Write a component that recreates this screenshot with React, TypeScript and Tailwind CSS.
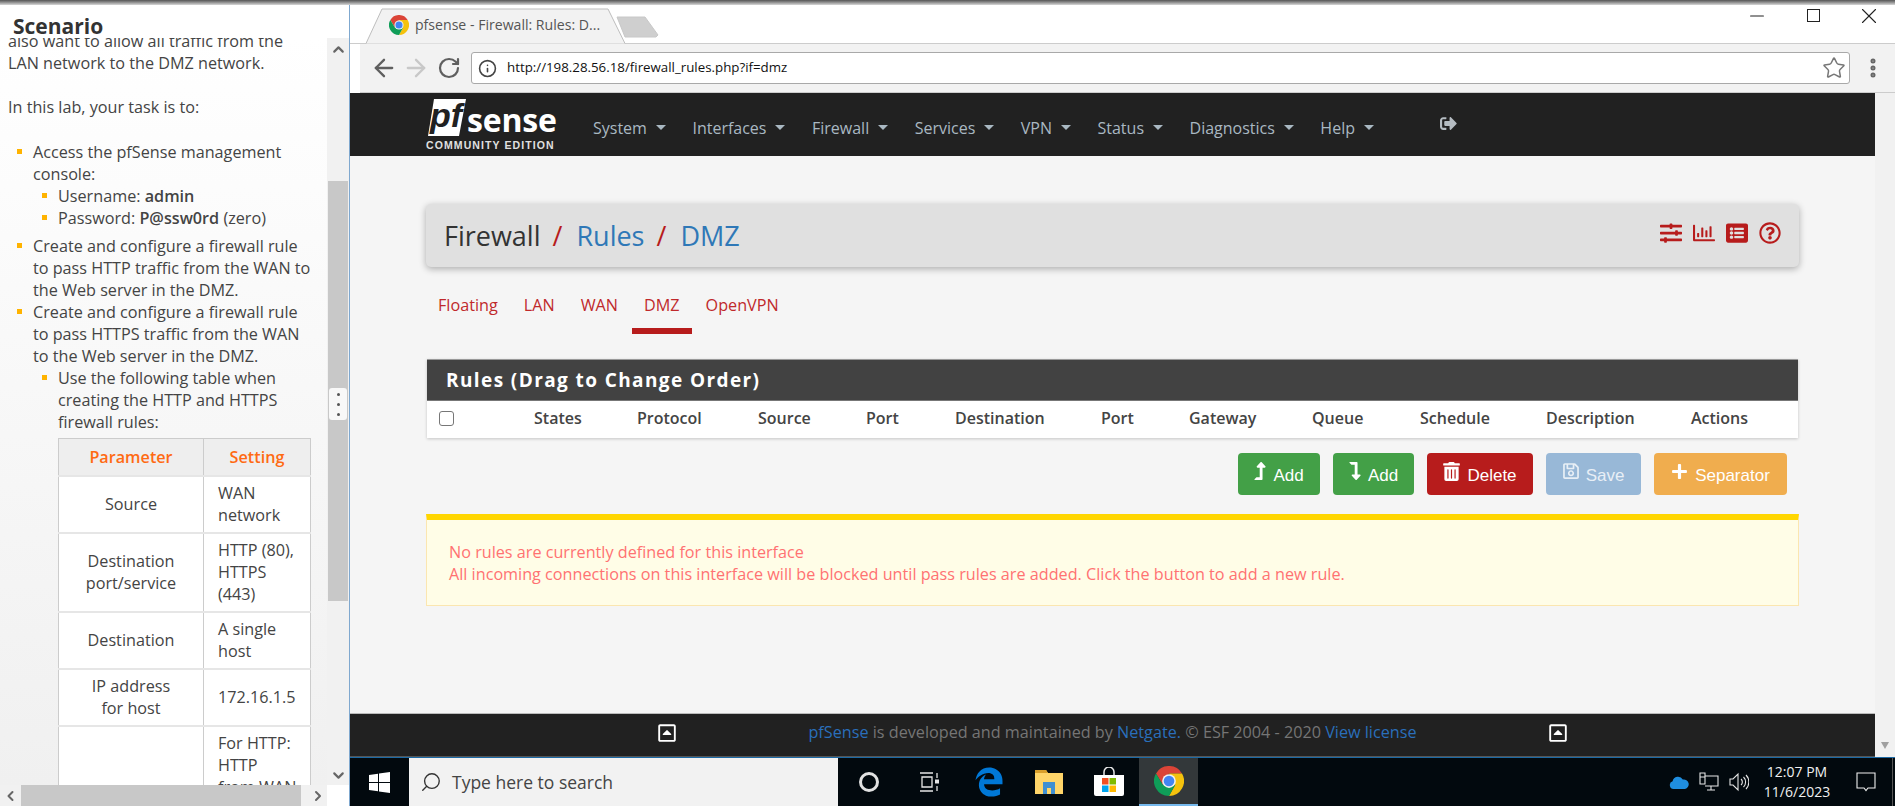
import { ArrowLeft, ArrowRight, ChevronDown, ChevronLeft, ChevronRight, ChevronUp, EllipsisVertical, Info, Minus, RotateCw, Search, Star, X } from "lucide-react";
import {
  FaEdgeLegacy, FaListAlt, FaLevelDownAlt, FaLevelUpAlt, FaPlus, FaRegCaretSquareUp, FaRegChartBar,
  FaRegQuestionCircle, FaRegSave, FaSignOutAlt, FaSlidersH, FaTrashAlt,
} from "react-icons/fa";

const NAV_ITEMS = ["System", "Interfaces", "Firewall", "Services", "VPN", "Status", "Diagnostics", "Help"];
const TABS = ["Floating", "LAN", "WAN", "DMZ", "OpenVPN"];

const COLUMNS = [
  { label: "States", width: 103 },
  { label: "Protocol", width: 121 },
  { label: "Source", width: 108 },
  { label: "Port", width: 89 },
  { label: "Destination", width: 146 },
  { label: "Port", width: 88 },
  { label: "Gateway", width: 123 },
  { label: "Queue", width: 108 },
  { label: "Schedule", width: 126 },
  { label: "Description", width: 145 },
  { label: "Actions", width: 107 },
];

function ChromeLogo({ size }: { size: number }) {
  return (
    <svg width={size} height={size} viewBox="0 0 48 48">
      <path d="M3.2 12A24 24 0 0 1 44.8 12H24L14 30Z" fill="#db4437" />
      <path d="M44.8 12A24 24 0 0 1 24 48L34 30L24 12Z" fill="#f4c20d" />
      <path d="M24 48A24 24 0 0 1 3.2 12L14 30L34 30Z" fill="#0f9d58" />
      <circle cx="24" cy="24" r="11" fill="#f1f1f1" />
      <circle cx="24" cy="24" r="8.5" fill="#4285f4" />
    </svg>
  );
}

function Bullet({ nested, children }: { nested?: boolean; children: React.ReactNode }) {
  return (
    <li className={`relative ${nested ? "pl-[50px]" : "pl-[25px]"}`}>
      <span className={`absolute top-[8px] h-[5px] w-[5px] bg-[#ffb300] ${nested ? "left-[34px]" : "left-[9px]"}`} />
      {children}
    </li>
  );
}

function ParamRow({ name, value }: { name: string; value: string }) {
  return (
    <tr className="border-b-2 border-[#e6e6e6] bg-white">
      <td className="border-x border-[#ccc] px-[24px] py-[5.5px] text-center">{name}</td>
      <td className="border-x border-[#ccc] py-[5.5px] pl-[14px] pr-[13px]">{value}</td>
    </tr>
  );
}

function ScenarioPanel() {
  return (
    <aside className="flex w-[350px] shrink-0 flex-col border-r border-[#7fa8cf] bg-white text-[16.2px] leading-[22px] text-[#444]">
      <div className="relative z-10 flex h-[33px] items-center bg-white pl-[13px] pt-[8px] text-[21px] font-bold text-[#333]">Scenario</div>
      <div className="flex min-h-0 flex-1">
        <div className="min-w-0 flex-1 overflow-hidden bg-gradient-to-b from-white to-[#f0f0f0]">
          <div className="-mt-[8px] pl-[8px] pr-[14px]">
            <p>also want to allow all traffic from the LAN network to the DMZ network.</p>
            <p className="mt-[22px]">In this lab, your task is to:</p>
            <ul className="mt-[23px]">
              <Bullet>Access the pfSense management console:</Bullet>
              <Bullet nested>Username: <b className="font-semibold">admin</b></Bullet>
              <Bullet nested>Password: <b className="font-semibold">P@ssw0rd</b> (zero)</Bullet>
              <li className="h-[6px]" />
              <Bullet>Create and configure a firewall rule to pass HTTP traffic from the WAN to the Web server in the DMZ.</Bullet>
              <Bullet>Create and configure a firewall rule to pass HTTPS traffic from the WAN to the Web server in the DMZ.</Bullet>
              <Bullet nested>Use the following table when creating the HTTP and HTTPS firewall rules:</Bullet>
            </ul>
            <table className="ml-[50px] mt-[5px] w-[252px] table-fixed border-t border-[#ccc]">
              <colgroup>
                <col className="w-[145px]" />
                <col className="w-[107px]" />
              </colgroup>
              <thead>
                <tr className="h-[37px] border-b-2 border-[#e6e6e6] bg-[#eeeeee] font-semibold text-[#ff6a13]">
                  <th className="border-x border-[#ccc] font-semibold">Parameter</th>
                  <th className="border-x border-[#ccc] font-semibold">Setting</th>
                </tr>
              </thead>
              <tbody>
                <ParamRow name="Source" value="WAN network" />
                <ParamRow name="Destination port/service" value="HTTP (80), HTTPS (443)" />
                <ParamRow name="Destination" value="A single host" />
                <ParamRow name="IP address for host" value="172.16.1.5" />
                <ParamRow name="" value="For HTTP: HTTP from WAN" />
              </tbody>
            </table>
          </div>
        </div>
        {/* vertical scrollbar */}
        <div className="flex w-[22px] shrink-0 flex-col items-center bg-[#f1f1f1]">
          <ChevronUp size={17} strokeWidth={3} className="mt-[3px] text-[#666]" />
          <div className="relative mt-[123px] h-[420px] w-[20px] bg-[#c8c8c8]">
            <div className="absolute left-[1px] top-[207px] flex h-[32px] w-[18px] flex-col items-center justify-center gap-[7px] rounded-[3px] bg-[#f8f8f8]">
              <span className="h-[3px] w-[3px] rounded-full bg-[#555]" />
              <span className="h-[3px] w-[3px] rounded-full bg-[#555]" />
              <span className="h-[3px] w-[3px] rounded-full bg-[#555]" />
            </div>
          </div>
          <ChevronDown size={17} strokeWidth={3} className="mt-auto mb-[1px] text-[#666]" />
        </div>
      </div>
      {/* horizontal scrollbar */}
      <div className="flex h-[21px] shrink-0 items-center">
        <div className="flex h-full w-[327px] items-center bg-[#f1f1f1]">
          <ChevronLeft size={16} strokeWidth={3} className="ml-[2px] w-[17px] text-[#666]" />
          <div className="ml-[2px] h-full w-[280px] bg-[#c8c8c8]" />
          <ChevronRight size={16} strokeWidth={3} className="ml-[9px] text-[#666]" />
        </div>
      </div>
    </aside>
  );
}

function BrowserChrome() {
  return (
    <>
      <div className="flex h-[39px] shrink-0 items-start border-b border-[#ccc] bg-white">
        <div className="relative z-10 ml-[15px] mt-[3px] flex h-[36px] w-[261px] items-center pb-[2px] pl-[24px] text-[14.1px] text-[#555]">
          <svg className="absolute inset-0" width="261" height="36" viewBox="0 0 261 36">
            <path d="M1 35.5L17 1H243L260 35.5" fill="#f2f2f2" stroke="#bdbdbd" />
          </svg>
          <span className="relative flex items-center gap-[6px]">
            <ChromeLogo size={20} />
            pfsense - Firewall: Rules: D...
          </span>
        </div>
        <svg className="ml-[-11px] mt-[11px]" width="44" height="22" viewBox="0 0 44 22">
          <path d="M2 1H30L43 19L41 21H10Z" fill="#cfcfcf" stroke="#c8c8c8" strokeLinejoin="round" />
        </svg>
        <div className="ml-auto flex h-[20px] text-[#222]">
          <div className="flex w-[57px] items-center justify-center pt-[1px]"><Minus size={22} strokeWidth={1.2} /></div>
          <div className="flex w-[57px] items-center justify-center pt-[1px]"><span className="h-[13px] w-[13px] border-[1.5px] border-[#222]" /></div>
          <div className="flex w-[53px] items-center justify-center pt-[1px]"><X size={26} strokeWidth={1} /></div>
        </div>
      </div>
      <div className="ml-[10px] flex h-[49px] shrink-0 items-center border-b border-[#ccc] bg-[#f2f2f2]">
        <div className="ml-[8px] flex w-[32px] justify-center"><ArrowLeft size={28} strokeWidth={2} className="text-[#5f5f5f]" /></div>
        <div className="flex w-[32px] justify-center"><ArrowRight size={28} strokeWidth={2} className="text-[#c8c8c8]" /></div>
        <div className="flex w-[33px] justify-center"><RotateCw size={24} strokeWidth={2.2} className="text-[#5f5f5f]" /></div>
        <div className="ml-[6px] flex h-[32px] flex-1 items-center rounded-[3px] border border-[#a9a9a9] bg-white pl-[6px] pr-[3px]">
          <Info size={19} strokeWidth={2} className="text-[#444]" />
          <span className="ml-[10px] text-[13.3px] text-[#111]">http://198.28.56.18/firewall_rules.php?if=dmz</span>
          <Star size={24} strokeWidth={1.5} className="ml-auto text-[#777]" />
        </div>
        <div className="flex w-[45px] justify-center"><EllipsisVertical size={24} strokeWidth={3} className="text-[#666]" /></div>
      </div>
    </>
  );
}

function PfLogo() {
  return (
    <div className="w-[132px] select-none text-white">
      <div className="flex h-[38px] items-end">
        <svg className="ml-[2px]" width="38" height="37" viewBox="0 0 38 37">
          <path d="M6 0H38L31 37H0Z" fill="#ffffff" />
          <text x="2" y="28" fontSize="34" fontWeight="700" fontStyle="italic" fill="#212121" fontFamily="Liberation Sans, sans-serif">pf</text>
        </svg>
        <span className="ml-[1px] text-[32px] font-bold leading-[32px] tracking-[-0.2px]">sense</span>
      </div>
      <div className="mt-[3px] whitespace-nowrap font-['Liberation_Sans',sans-serif] text-[10.5px] font-bold leading-[12px] tracking-[1.1px] text-[#e0e0e0]">COMMUNITY EDITION</div>
    </div>
  );
}

function NavBar() {
  return (
    <nav className="flex h-[63px] shrink-0 items-center bg-[#212121] pl-[76px] text-[16px] text-[#a9b8c2]">
      <PfLogo />
      <div className="ml-[35px] flex items-center pt-[6px]">
        {NAV_ITEMS.map((item) => (
          <a key={item} className="mr-[26.5px] flex items-center gap-[9px]">
            {item}
            <span className="h-0 w-0 border-x-[5px] border-t-[5px] border-x-transparent border-t-[#a9b8c2]" />
          </a>
        ))}
      </div>
      <FaSignOutAlt size={17} className="ml-[40px] mb-[2px] text-[#b5bcc2]" />
    </nav>
  );
}

function ActionButton({ color, icon, label, width, text = "text-white" }: { color: string; icon: React.ReactNode; label: string; width: string; text?: string }) {
  return (
    <button className={`flex h-[42px] items-center justify-center gap-[7px] rounded-[4px] font-['Liberation_Sans',sans-serif] text-[17px] ${width} ${color} ${text}`}>
      <span className="mb-[6px] flex">{icon}</span>
      <span className="mt-[4px]">{label}</span>
    </button>
  );
}

function FirewallMain() {
  return (
    <main className="min-h-0 flex-1 bg-[#f5f5f5] px-[76px] pt-[48px]">
      <div className="flex h-[63px] items-center justify-between rounded-[5px] bg-[#e0e0e0] pl-[18px] pr-[18px] shadow-[0_2px_7px_rgba(0,0,0,0.3)]">
        <h1 className="pt-[1px] text-[27px] text-[#333]">
          Firewall
          <span className="ml-[12px] mr-[14px] text-[#b71c1c]">/</span>
          <a className="text-[#2f78b7]">Rules</a>
          <span className="ml-[12px] mr-[14px] text-[#b71c1c]">/</span>
          <a className="text-[#2f78b7]">DMZ</a>
        </h1>
        <div className="mb-[6px] flex items-center gap-[11px] text-[#b71c1c]">
          <FaSlidersH size={22} />
          <FaRegChartBar size={22} />
          <FaListAlt size={22} />
          <FaRegQuestionCircle size={22} />
        </div>
      </div>

      <ul className="mt-[15px] flex gap-[2px] text-[16.2px] leading-[22px] text-[#c0292b]">
        {TABS.map((t) => (
          <li key={t} className={`border-b-[6px] px-[12px] pb-[12px] pt-[12px] ${t === "DMZ" ? "border-[#b71c1c]" : "border-transparent"}`}>{t}</li>
        ))}
      </ul>

      <section className="mx-[1px] mt-[25px] shadow-[0_1px_3px_rgba(0,0,0,0.2)]">
        <h2 className="flex h-[42px] items-center border-y border-t-[#999] border-b-[#777] bg-[#424242] pl-[19px] text-[19px] font-bold tracking-[1.4px] text-white">Rules (Drag to Change Order)</h2>
        <table className="w-full table-fixed bg-white">
          <thead>
            <tr className="h-[37px] text-left text-[16px] font-semibold text-[#444]">
              <th className="w-[107px] pb-[2px] pl-[12px] align-middle">
                <span className="block h-[15px] w-[15px] rounded-[3px] border-[1.5px] border-[#777] bg-white" />
              </th>
              {COLUMNS.map((c, i) => (
                <th key={i} className="pb-[3px] font-semibold" style={{ width: c.width }}>{c.label}</th>
              ))}
            </tr>
          </thead>
        </table>
      </section>

      <div className="mr-[12px] mt-[15px] flex justify-end gap-[13px]">
        <ActionButton width="w-[82px]" color="bg-[#43a047]" icon={<FaLevelUpAlt className="h-[18px] w-[12px]" />} label="Add" />
        <ActionButton width="w-[81px]" color="bg-[#43a047]" icon={<FaLevelDownAlt className="h-[18px] w-[12px]" />} label="Add" />
        <ActionButton width="w-[106px]" color="bg-[#b71c1c]" icon={<FaTrashAlt className="h-[19px] w-[17px]" />} label="Delete" />
        <ActionButton width="w-[95px]" color="bg-[#98b8d7]" icon={<FaRegSave className="h-[18px] w-[16px]" />} label="Save" text="text-[#e8eff6]" />
        <ActionButton width="w-[133px]" color="bg-[#f0ad4e]" icon={<FaPlus className="h-[17px] w-[17px]" />} label="Separator" />
      </div>

      <div className="mt-[19px] border border-t-[6px] border-[#fbe6b0] border-t-[#ffd600] bg-[#fffde7] px-[22px] pb-[20px] pt-[21px] text-[16.2px] leading-[22px] text-[#ff7272]">
        <p>No rules are currently defined for this interface</p>
        <p>All incoming connections on this interface will be blocked until pass rules are added. Click the button to add a new rule.</p>
      </div>
    </main>
  );
}

function PageFooter() {
  return (
    <footer className="flex h-[44px] shrink-0 items-center justify-center gap-[131px] border-y border-t-[#bbb] border-b-[#555] bg-[#212121] pb-[5px] text-[16.2px] text-[#757575]">
      <FaRegCaretSquareUp size={20} className="text-white" />
      <p className="whitespace-nowrap">
        <a className="text-[#2a6fbb]">pfSense</a> is developed and maintained by <a className="text-[#2a6fbb]">Netgate.</a> © ESF 2004 - 2020 <a className="text-[#2a6fbb]">View license</a>
      </p>
      <FaRegCaretSquareUp size={20} className="text-white" />
    </footer>
  );
}

function TaskBar() {
  return (
    <div className="flex h-[49px] shrink-0 items-stretch border-t border-[#1c6aa5] bg-[#02090e] text-white">
      <div className="flex w-[59px] items-center justify-center">
        <svg width="21" height="21" viewBox="0 0 21 21" fill="#ffffff">
          <path d="M0 3L9 1.7V10H0ZM10 1.5L21 0V10H10ZM0 11H9V19.3L0 18ZM10 11H21V21L10 19.5Z" />
        </svg>
      </div>
      <div className="flex w-[429px] items-center bg-[#f2f2f2] pl-[11px] text-[#444]">
        <Search size={22} strokeWidth={1.5} className="-scale-x-100 text-[#333]" />
        <span className="ml-[10px] text-[17.5px]">Type here to search</span>
      </div>
      <div className="flex w-[61px] items-center justify-center">
        <span className="h-[20px] w-[20px] rounded-full border-[3px] border-[#e2e2e2]" />
      </div>
      <div className="flex w-[60px] items-center justify-center">
        <svg width="20" height="20" viewBox="0 0 20 20" fill="none" stroke="#e6e6e6" strokeWidth="1.3">
          <path d="M1 1H14M1 19H14M3 5H13V15H3ZM18 1V6M18 14V19" />
          <rect x="16" y="7.5" width="4" height="4" fill="#e6e6e6" stroke="none" />
        </svg>
      </div>
      <div className="flex w-[60px] items-center justify-center">
        <FaEdgeLegacy size={30} className="text-[#0078d7]" />
      </div>
      <div className="flex w-[60px] items-center justify-center">
        <svg width="28" height="26" viewBox="0 0 28 26">
          <path d="M0 1H11L13 4H28V25H0Z" fill="#ffd569" />
          <path d="M0 1H11L13 4H0Z" fill="#d99f2b" />
          <rect x="8" y="13" width="12" height="8" fill="#3f8fd2" />
          <rect x="8" y="18" width="4" height="7" fill="#3f8fd2" />
          <rect x="16" y="18" width="4" height="7" fill="#3f8fd2" />
          <rect x="12" y="19" width="4" height="6" fill="#ffd569" />
        </svg>
      </div>
      <div className="flex w-[60px] items-center justify-center">
        <svg width="30" height="30" viewBox="0 0 30 30">
          <path d="M10 9V5A5 5 0 0 1 20 5V9" fill="none" stroke="#e8e8e8" strokeWidth="1.5" />
          <path d="M0 8H30V27A2 2 0 0 1 28 29H2A2 2 0 0 1 0 27Z" fill="#ffffff" />
          <rect x="8" y="11" width="6.5" height="6.5" fill="#f25022" />
          <rect x="15.5" y="11" width="6.5" height="6.5" fill="#7fba00" />
          <rect x="8" y="18.5" width="6.5" height="6.5" fill="#00a4ef" />
          <rect x="15.5" y="18.5" width="6.5" height="6.5" fill="#ffb900" />
        </svg>
      </div>
      <div className="flex w-[59px] items-center justify-center border-b-2 border-[#76b9ed] bg-[#33383a]">
        <ChromeLogo size={30} />
      </div>

      <div className="ml-auto flex w-[30px] items-center justify-center">
        <svg width="20" height="14" viewBox="0 0 20 14">
          <path d="M5 14A4 4 0 0 1 3.6 6.2A5.5 5.5 0 0 1 13.8 4.6A4.6 4.6 0 0 1 16 14Z" fill="#1f8ee0" />
        </svg>
      </div>
      <div className="flex w-[30px] items-center justify-center">
        <svg width="20" height="20" viewBox="0 0 20 20" fill="none" stroke="#e6e6e6" strokeWidth="1.1">
          <path d="M6 4H19V14H6M12 14V18M8 18H16M1 1H6V12H1ZM1 5H6" />
        </svg>
      </div>
      <div className="flex w-[30px] items-center justify-center">
        <svg width="20" height="20" viewBox="0 0 20 20" fill="none" stroke="#e6e6e6" strokeWidth="1.1">
          <path d="M1 7H4L9 2V18L4 13H1ZM12 7A4 4 0 0 1 12 13M14.5 5A7 7 0 0 1 14.5 15M17 3A10 10 0 0 1 17 17" />
        </svg>
      </div>
      <div className="flex w-[86px] flex-col items-center justify-center text-[14px] leading-[20px] text-[#f0f0f0]">
        <span>12:07 PM</span>
        <span>11/6/2023</span>
      </div>
      <div className="flex w-[52px] items-center justify-center">
        <svg width="20" height="20" viewBox="0 0 20 20" fill="none" stroke="#f0f0f0" strokeWidth="1.1">
          <path d="M1 1H19V16H12L10 18.5L8 16H1Z" />
        </svg>
      </div>
      <div className="w-[3px] border-l border-[#555]" />
    </div>
  );
}

export default function App() {
  return (
    <div className="flex h-[806px] w-[1895px] flex-col overflow-hidden bg-white font-['Open_Sans',sans-serif]">
      <div className="h-[5px] shrink-0 bg-gradient-to-b from-[#555] to-[#d8d8d8]" />
      <div className="flex min-h-0 flex-1">
        <ScenarioPanel />
        <div className="flex min-w-0 flex-1 flex-col">
          <BrowserChrome />
          <div className="flex min-h-0 flex-1">
            <div className="flex min-w-0 flex-1 flex-col">
              <NavBar />
              <FirewallMain />
              <PageFooter />
            </div>
            <div className="flex w-[20px] shrink-0 flex-col items-center justify-end bg-[#f1f1f1] pb-[8px]">
              <span className="h-0 w-0 border-x-[4px] border-t-[7px] border-x-transparent border-t-[#a0a0a0]" />
            </div>
          </div>
          <TaskBar />
        </div>
      </div>
    </div>
  );
}
